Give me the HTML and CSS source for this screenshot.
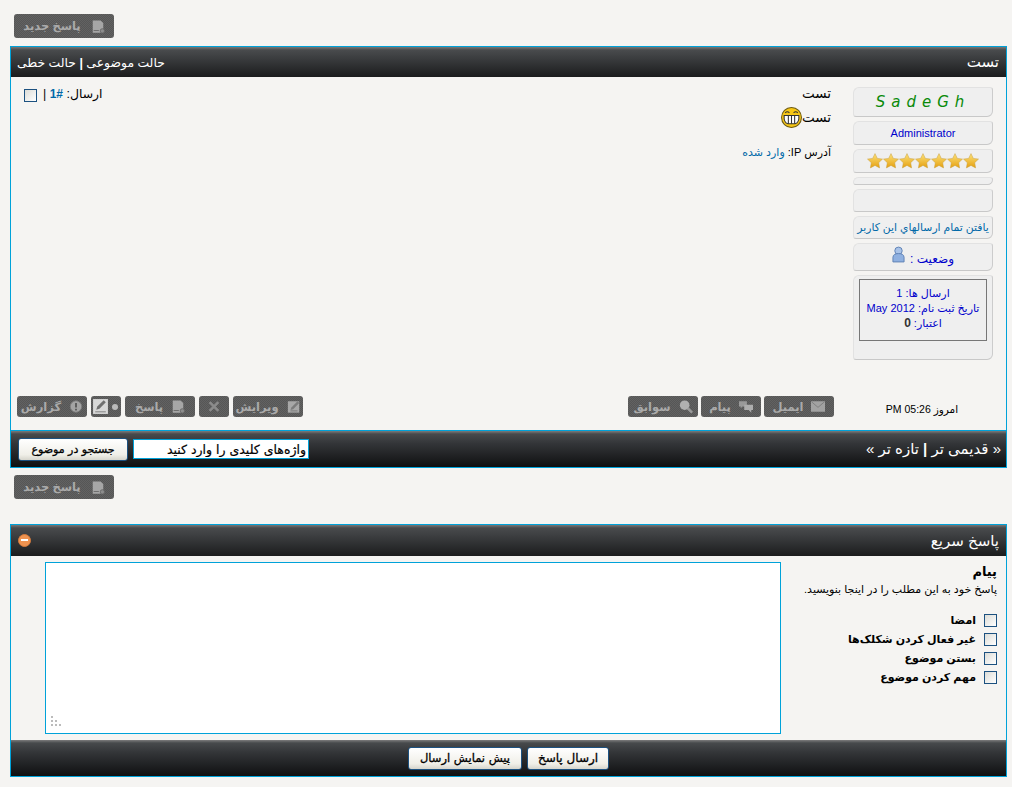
FILE: index.html
```html
<!DOCTYPE html>
<html lang="fa" dir="rtl">
<head>
    <meta charset="UTF-8">
    <title>تست</title>
    <link rel="stylesheet" href="styles.css">
</head>
<body>
    <svg class="defs" width="0" height="0">
        <defs>
            <linearGradient id="starFill" x1="0" y1="0" x2="0" y2="1">
                <stop offset="0" stop-color="#fde27a"/>
                <stop offset="1" stop-color="#e5a010"/>
            </linearGradient>
            <symbol id="star" viewBox="0 0 16 16">
                <path d="M8 .6l2.300 4.800 5.200.7-3.800 3.600.9 5.200L8 12.400l-4.600 2.500.9-5.200L.5 6.100l5.200-.7z" fill="url(#starFill)" stroke="#c9a040" stroke-width=".5"/>
            </symbol>
            <symbol id="doc" viewBox="0 0 16 16">
                <path d="M2 1h9l3 3v11H2z" fill="#a6a6a6"/>
                <path d="M3 12h6v1H3z" fill="#666"/>
                <circle cx="13" cy="13" r="2.500" fill="#8c8c8c" stroke="#666"/>
            </symbol>
            <symbol id="edit" viewBox="0 0 16 16">
                <path d="M1 2h13v13H1z" fill="#a8a8a8"/>
                <path d="M4 12l1-3 7-7 2 2-7 7z" fill="#7c7c7c"/>
                <path d="M4 13h8" stroke="#777"/>
            </symbol>
            <symbol id="editlight" viewBox="0 0 16 16">
                <path d="M1 1h14v14H1z" fill="#d8d8d8"/>
                <path d="M4 11l1-3 6-6 2 2-6 6z" fill="#707070"/>
                <path d="M3 13h10" stroke="#888"/>
            </symbol>
            <symbol id="cross" viewBox="0 0 16 16">
                <path d="M3 3l10 10M13 3L3 13" stroke="#8b8b8b" stroke-width="3"/>
            </symbol>
            <symbol id="info" viewBox="0 0 16 16">
                <circle cx="8" cy="8" r="6.500" fill="#a4a4a4" stroke="#7d7d7d"/>
                <path d="M8 4v5M8 10.500v2" stroke="#555" stroke-width="2"/>
            </symbol>
            <symbol id="mail" viewBox="0 0 16 12">
                <path d="M0 0h16v12H0z" fill="#a2a2a2"/>
                <path d="M.5.500L8 7l7.500-6.500" fill="none" stroke="#7a7a7a"/>
            </symbol>
            <symbol id="chat" viewBox="0 0 16 14">
                <path d="M0 1h9v6H4L2 9V7H0z" fill="#999"/>
                <path d="M6 5h10v6h-2v3l-3-3H6z" fill="#adadad"/>
            </symbol>
            <symbol id="lens" viewBox="0 0 16 16">
                <circle cx="6.500" cy="6.500" r="5.500" fill="#b0b0b0"/>
                <path d="M10 10l5 5" stroke="#9a9a9a" stroke-width="3"/>
            </symbol>
        </defs>
    </svg>

    <div class="page">
        <div class="reply-row">
            <a class="tbtn"><svg class="ico"><use href="#doc"/></svg>پاسخ جدید</a>
        </div>

        <div class="panel">
            <div class="bar head">
                <span class="title">تست</span>
                <span class="modes">حالت موضوعی <b>|</b> حالت خطی</span>
            </div>
            <div class="post">
                <div class="post-main">
                    <div class="author">
                        <div class="abox name">SadeGh</div>
                        <div class="abox rank">Administrator</div>
                        <div class="abox stars">
                            <svg><use href="#star"/></svg><svg><use href="#star"/></svg><svg><use href="#star"/></svg><svg><use href="#star"/></svg><svg><use href="#star"/></svg><svg><use href="#star"/></svg><svg><use href="#star"/></svg>
                        </div>
                        <div class="abox thin"></div>
                        <div class="abox empty"></div>
                        <div class="abox find"><a>یافتن تمام ارسالهاي اين کاربر</a></div>
                        <div class="abox status">
                            <span class="status-text">وضعیت :</span>
                            <svg class="user" viewBox="0 0 14 18">
                                <circle cx="7" cy="5" r="4" fill="#a9c3e8" stroke="#5d7fb3"/>
                                <path d="M1 17v-5c0-3 3-4 6-4s6 1 6 4v5z" fill="#8fb0e0" stroke="#5d7fb3"/>
                            </svg>
                        </div>
                        <div class="abox stats">
                            <div class="stats-in">
                                <div>ارسال ها: 1</div>
                                <div>تاریخ ثبت نام: May 2012</div>
                                <div>اعتبار: <b>0</b></div>
                            </div>
                        </div>
                    </div>
                    <div class="message">
                        <div class="msg-subject">تست</div>
                        <div class="msg-text">تست<svg class="smile" viewBox="0 0 20 20">
                                <circle cx="10" cy="10" r="9.500" fill="#f6c615" stroke="#6d5a12"/>
                                <path d="M4 5.500q2-2 4 0M12 5.500q2-2 4 0" fill="none" stroke="#333"/>
                                <path d="M3 8h14q.5 7-3.500 8h-7q-4-1-3.500-8z" fill="#fff" stroke="#333"/>
                                <path d="M7 8v8M10 8v8M13 8v8" stroke="#333"/>
                            </svg></div>
                        <div class="msg-ip">آدرس IP: <a>وارد شده</a></div>
                    </div>
                    <div class="meta">
                        <span>ارسال: <bdo class="num" dir="ltr">1#</bdo> |</span>
                        <span class="chk"></span>
                    </div>
                </div>
                <div class="actions">
                    <div class="date">امروز 05:26 PM</div>
                    <div class="act-group first">
                        <a class="tbtn act"><svg class="ico mail"><use href="#mail"/></svg>ایمیل</a>
                        <a class="tbtn act w60"><svg class="ico"><use href="#chat"/></svg>پیام</a>
                        <a class="tbtn act"><svg class="ico"><use href="#lens"/></svg>سوابق</a>
                    </div>
                    <div class="act-group second">
                        <a class="tbtn act"><svg class="ico"><use href="#edit"/></svg>ویرایش</a>
                        <a class="tbtn act w30"><svg class="ico"><use href="#cross"/></svg></a>
                        <a class="tbtn act"><svg class="ico"><use href="#doc"/></svg>پاسخ</a>
                        <a class="tbtn act w30 multi"><span class="dot"></span><svg class="multi-ico"><use href="#editlight"/></svg></a>
                        <a class="tbtn act"><svg class="ico"><use href="#info"/></svg>گزارش</a>
                    </div>
                </div>
            </div>
            <div class="bar foot">
                <span class="pager">« قدیمی تر <b>|</b> تازه تر »</span>
                <form class="search">
                    <input class="search-box" type="text" value="واژه‌های کلیدی را وارد کنید">
                    <button class="btn search-btn" type="button">جستجو در موضوع</button>
                </form>
            </div>
        </div>

        <div class="reply-row below">
            <a class="tbtn"><svg class="ico"><use href="#doc"/></svg>پاسخ جدید</a>
        </div>

        <div class="panel quick">
            <div class="bar head">
                <span class="title">پاسخ سریع</span>
                <span class="collapse"></span>
            </div>
            <div class="quick-body">
                <div class="options">
                    <div class="opt-title">پیام</div>
                    <div class="opt-hint">پاسخ خود به این مطلب را در اینجا بنویسید.</div>
                    <label class="opt"><span class="chk"></span>امضا</label>
                    <label class="opt"><span class="chk"></span>غیر فعال کردن شکلک‌ها</label>
                    <label class="opt"><span class="chk"></span>بستن موضوع</label>
                    <label class="opt"><span class="chk"></span>مهم کردن موضوع</label>
                </div>
                <div class="editor">
                    <svg class="grip" width="10" height="10">
                        <path d="M0 0h2v2H0zM0 4h2v2H0zM4 4h2v2H4zM0 8h2v2H0zM4 8h2v2H4zM8 8h2v2H8z" fill="#bbb"/>
                    </svg>
                </div>
            </div>
            <div class="bar foot center">
                <button class="btn send" type="button">ارسال پاسخ</button>
                <button class="btn preview" type="button">پیش نمایش ارسال</button>
            </div>
        </div>
    </div>
</body>
</html>
```

FILE: styles.css
```css
* { box-sizing: border-box; }
body { margin: 0; background: #f5f4f2; color: #000; font-family: "Liberation Sans", "DejaVu Sans", sans-serif; font-size: 11px; }
a { color: #0068a8; text-decoration: none; }
.defs { display: block; height: 0; }
.page { padding: 14px 5px 10px 10px; }

/* grey image-style buttons */
.reply-row { display: flex; justify-content: flex-end; height: 24px; margin-bottom: 8px; padding-left: 4px; }
.reply-row.below { margin: 7px 0 25px; }
.tbtn { display: flex; align-items: center; justify-content: center; gap: 10px; width: 100px; height: 24px; border-radius: 3px; color: #aaa; font-weight: bold; font-size: 11.500px;
    background: repeating-conic-gradient(#565656 0 25%, #626262 0 50%) 0 0 / 2px 2px; }
.ico { width: 14px; height: 15px; flex: none; }

/* panels */
.panel { border: 1px solid #00a2d9; }
.bar { display: flex; align-items: center; justify-content: space-between; color: #fff; }
.head { height: 30px; padding: 0 7px 0 6px; background: linear-gradient(#787878 0, #494b4d 3px, #3c3e40 35%, #1b1c1d 100%); }
.quick .head { height: 31px; }
.foot { height: 36px; background: linear-gradient(#7c7c7c 0, #474a4c 3px, #333538 35%, #0f1011 100%); }
.title { font-size: 15px; }
.modes { font-size: 12.400px; }

/* first post */
.post { height: 354px; border-bottom: 1px solid #00a2d9; }
.post-main { display: flex; align-items: flex-start; height: 309px; padding: 10px 13px 0; }
.author { display: flex; flex-direction: column; gap: 4px; width: 140px; flex: none; margin-left: 22px; }
.abox { display: flex; align-items: center; justify-content: center; background: #efefef; border: 1px solid #e2e2e2; border-right-color: #ccc; border-bottom-color: #c8c8c8; border-radius: 6px 3px 6px 3px; color: #00c; }
.name { height: 30px; color: #0a8a0a; font-family: "DejaVu Sans", sans-serif; font-size: 15px; font-style: italic; letter-spacing: 6px; direction: ltr; }
.rank { height: 24px; }
.stars { height: 24px; gap: 0; }
.stars svg { width: 16px; height: 16px; }
.thin { height: 8px; }
.empty { height: 23px; }
.find { height: 23px; white-space: nowrap; overflow: hidden; font-size: 10.800px; }
.status { height: 28px; gap: 5px; }
.status-text { padding-top: 3px; font-size: 12px; }
.user { width: 13px; height: 17px; margin-top: -5px; }
.stats { display: block; height: 85px; padding: 3px 5px; }
.stats-in { height: 62px; padding-top: 6px; border: 1px solid #777; text-align: center; line-height: 15px; }
.stats-in b { color: #333; font-size: 12px; }
.message { flex: 1; }
.msg-subject { font-size: 13.500px; line-height: 14px; font-weight: normal; }
.msg-text { display: flex; align-items: center; height: 22px; margin-top: 5px; font-size: 13.500px; }
.smile { width: 21px; height: 21px; }
.msg-ip { margin-top: 18px; }
.meta { display: flex; align-items: flex-start; gap: 6px; margin-top: 2px; font-size: 12.400px; line-height: 11px; }
.num { color: #0068a8; font-size: 12px; font-weight: bold; }
.chk { display: inline-block; flex: none; width: 13px; height: 13px; border: 1px solid #1c5180; background: linear-gradient(135deg, #dcdcd7, #fff); }

.actions { display: flex; align-items: flex-start; padding: 10px 0 0 6px; }
.date { width: 172px; padding: 7px 0 0 4px; text-align: center; font-size: 10.500px; }
.act-group { display: flex; gap: 4px; }
.act-group.first { gap: 3px; }
.act-group.second { margin-right: auto; }
.tbtn.act { width: 70px; height: 21px; gap: 8px; }
.tbtn.w60 { width: 60px; }
.tbtn.w30 { width: 30px; }
.tbtn.multi { gap: 3px; justify-content: flex-start; padding-right: 3px; }
.multi-ico { width: 17px; height: 19px; }
.dot { width: 6px; height: 6px; border-radius: 50%; background: #bbb; }

/* footer bars */
.pager { padding-right: 5px; font-size: 15px; }
.search { display: flex; align-items: center; gap: 5px; margin-left: 7px; }
.search-box { width: 176px; height: 20px; padding: 0 2px; border: 1px solid #00a2d9; background: #fff; font: 12.500px "DejaVu Sans", sans-serif; color: #000; -webkit-text-stroke: .2px #000; }
.btn { height: 23px; padding: 0; border: 1px solid #1c5180; border-radius: 3px; background: linear-gradient(#fff, #f0efe8 75%, #d6d5cc); color: #000; font: 11px "DejaVu Sans", sans-serif; -webkit-text-stroke: .3px #000; }
.search-btn { width: 110px; }
.center { justify-content: center; gap: 5px; }
.send { width: 82px; font-size: 12px; }
.preview { width: 114px; font-size: 11.500px; }

/* quick reply */
.collapse { position: relative; width: 13px; height: 13px; margin-left: 1px; border-radius: 50%; background: #ef9350; border: 1px solid #d47a3c; }
.collapse::after { content: ""; position: absolute; left: 2px; right: 2px; top: 4px; height: 2px; background: #fff; }
.quick-body { display: flex; height: 184px; padding: 6px 0 0 34px; }
.options { flex: 1; padding-right: 9px; }
.opt-title { padding-top: 3px; font-size: 13px; line-height: 14px; font-weight: bold; }
.opt-hint { margin-top: 3px; line-height: 14px; margin-bottom: 15px; }
.opt { display: flex; align-items: center; gap: 8px; height: 19px; font-weight: bold; }
.editor { position: relative; width: 736px; height: 172px; flex: none; border: 1px solid #00a2d9; background: #fff; }
.grip { position: absolute; left: 5px; bottom: 7px; }
```
